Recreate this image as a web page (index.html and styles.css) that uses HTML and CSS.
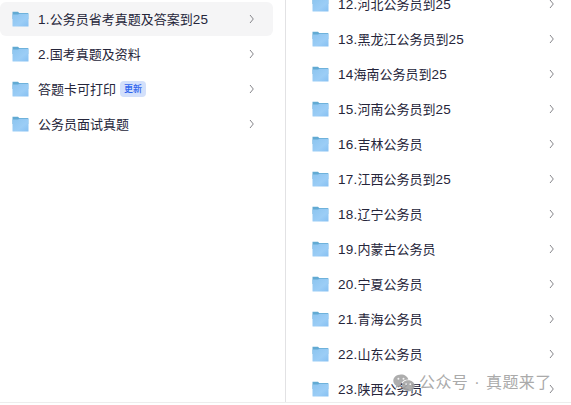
FILE: index.html
```html
<!DOCTYPE html>
<html lang="zh-CN">
<head>
    <meta charset="UTF-8">
    <title>文件列表</title>
    <link rel="stylesheet" href="styles.css">
</head>
<body>
<svg class="symbols" width="0" height="0">
    <defs>
        <linearGradient id="front" x1="0" y1="0" x2="1" y2="1">
            <stop offset="0" stop-color="#8cc4ef"/>
            <stop offset="0.6" stop-color="#9bcdf6"/>
            <stop offset="1" stop-color="#86c0f2"/>
        </linearGradient>
        <symbol id="folder" viewBox="0 0 17 16">
            <path d="M0.5 0.7H6L7.2 2H16.3V8H0.5Z" fill="#62aad3"/>
            <path d="M0.5 3.5H6L7.5 2.7H16.5V15.5H0.8L0.5 15.2Z" fill="url(#front)"/>
        </symbol>
        <symbol id="arrow" viewBox="0 0 6 10">
            <path d="M1 1L4.3 5L1 9" fill="none" stroke="#85858a" stroke-width="1"/>
        </symbol>
    </defs>
</svg>

<main class="browser">
    <ul class="column column-left">
        <li class="row active"><svg class="folder"><use href="#folder"/></svg><span class="name"><span class="num">1.</span>公务员省考真题及答案到<span class="num">25</span></span><svg class="arrow"><use href="#arrow"/></svg></li>
        <li class="row"><svg class="folder"><use href="#folder"/></svg><span class="name"><span class="num">2.</span>国考真题及资料</span><svg class="arrow"><use href="#arrow"/></svg></li>
        <li class="row"><svg class="folder"><use href="#folder"/></svg><span class="name">答题卡可打印</span><span class="tag">更新</span><svg class="arrow"><use href="#arrow"/></svg></li>
        <li class="row"><svg class="folder"><use href="#folder"/></svg><span class="name">公务员面试真题</span><svg class="arrow"><use href="#arrow"/></svg></li>
    </ul>
    <ul class="column column-right">
        <li class="row"><svg class="folder"><use href="#folder"/></svg><span class="name"><span class="num">12.</span>河北公务员到<span class="num">25</span></span><svg class="arrow"><use href="#arrow"/></svg></li>
        <li class="row"><svg class="folder"><use href="#folder"/></svg><span class="name"><span class="num">13.</span>黑龙江公务员到<span class="num">25</span></span><svg class="arrow"><use href="#arrow"/></svg></li>
        <li class="row"><svg class="folder"><use href="#folder"/></svg><span class="name"><span class="num">14</span>海南公务员到<span class="num">25</span></span><svg class="arrow"><use href="#arrow"/></svg></li>
        <li class="row"><svg class="folder"><use href="#folder"/></svg><span class="name"><span class="num">15.</span>河南公务员到<span class="num">25</span></span><svg class="arrow"><use href="#arrow"/></svg></li>
        <li class="row"><svg class="folder"><use href="#folder"/></svg><span class="name"><span class="num">16.</span>吉林公务员</span><svg class="arrow"><use href="#arrow"/></svg></li>
        <li class="row"><svg class="folder"><use href="#folder"/></svg><span class="name"><span class="num">17.</span>江西公务员到<span class="num">25</span></span><svg class="arrow"><use href="#arrow"/></svg></li>
        <li class="row"><svg class="folder"><use href="#folder"/></svg><span class="name"><span class="num">18.</span>辽宁公务员</span><svg class="arrow"><use href="#arrow"/></svg></li>
        <li class="row"><svg class="folder"><use href="#folder"/></svg><span class="name"><span class="num">19.</span>内蒙古公务员</span><svg class="arrow"><use href="#arrow"/></svg></li>
        <li class="row"><svg class="folder"><use href="#folder"/></svg><span class="name"><span class="num">20.</span>宁夏公务员</span><svg class="arrow"><use href="#arrow"/></svg></li>
        <li class="row"><svg class="folder"><use href="#folder"/></svg><span class="name"><span class="num">21.</span>青海公务员</span><svg class="arrow"><use href="#arrow"/></svg></li>
        <li class="row"><svg class="folder"><use href="#folder"/></svg><span class="name"><span class="num">22.</span>山东公务员</span><svg class="arrow"><use href="#arrow"/></svg></li>
        <li class="row"><svg class="folder"><use href="#folder"/></svg><span class="name"><span class="num">23.</span>陕西公务员</span><svg class="arrow"><use href="#arrow"/></svg></li>
    </ul>
</main>

<div class="watermark">
    <svg class="wechat" viewBox="0 0 22 19">
        <path d="M8 0.5C3.6 0.5 0.3 3.3 0.3 6.8C0.3 8.9 1.4 10.6 3.2 11.8L2.5 14L5.2 12.7Q6.5 13.1 8 13.1C7 8.8 10.6 5.5 15.4 5.6C14.7 2.6 11.7 0.5 8 0.5Z"/>
        <path d="M15.2 6.3C11.4 6.3 8.7 8.8 8.7 11.8C8.7 14.9 11.4 17.3 15.2 17.3Q16.4 17.3 17.5 17L19.8 18.3L19.2 16.2C20.8 15.2 21.7 13.6 21.7 11.8C21.7 8.8 18.9 6.3 15.2 6.3Z"/>
        <g class="eyes">
            <circle cx="5.4" cy="4.8" r="1"/>
            <circle cx="10.5" cy="4.8" r="1"/>
            <circle cx="13.1" cy="10.2" r="0.9"/>
            <circle cx="17.3" cy="10.2" r="0.9"/>
        </g>
    </svg>
    <span>公众号 · 真题来了</span>
</div>
</body>
</html>
```

FILE: styles.css
```css
* {
    margin: 0;
    padding: 0;
    box-sizing: border-box;
}
body {
    height: 405px;
    overflow: hidden;
    font-family: "Liberation Sans", "Noto Sans CJK SC", sans-serif;
    font-size: 13px;
    color: #25253a;
    background: #fff;
}
.symbols {
    display: block;
}
.browser {
    display: flex;
    height: 403px;
    overflow: hidden;
    border-bottom: 1px solid #ededed;
}
.column {
    list-style: none;
}
.column-left {
    width: 286px;
    padding: 2px 12px 0 0;
    border-right: 1px solid #e2e2e4;
}
.column-right {
    flex: 1;
    margin-top: -13px;
    padding-left: 14px;
}
.row {
    display: flex;
    align-items: center;
    height: 34px;
    margin-bottom: 1px;
    padding: 0 18px 0 12px;
    border-radius: 6px;
}
.column-right .row {
    padding-right: 16px;
}
.row.active {
    background: #f5f5f6;
}
.folder {
    width: 17px;
    height: 16px;
    margin-right: 9px;
}
.name {
    padding-top: 2px;
    line-height: 20px;
    white-space: nowrap;
}
.num {
    font-size: 13.5px;
    line-height: 1;
    letter-spacing: 0.25px;
}
.tag {
    margin-left: 4px;
    padding: 0 4px;
    font-size: 9px;
    font-weight: 500;
    line-height: 16px;
    color: #2f64ee;
    background: #d3e0fb;
    border-radius: 4px;
}
.arrow {
    width: 6px;
    height: 10px;
    margin-left: auto;
}
/* account mark laid over the list */
.watermark {
    position: absolute;
    left: 393px;
    top: 371px;
    display: flex;
    align-items: center;
    gap: 4px;
    font-size: 16px;
    line-height: 24px;
    letter-spacing: 0.4px;
    word-spacing: 1.2px;
    color: #aaa;
    white-space: nowrap;
}
.wechat {
    width: 22px;
    height: 19px;
    fill: #a5a5a5;
    opacity: 0.9;
}
.eyes {
    fill: #f2f2f2;
}
```
